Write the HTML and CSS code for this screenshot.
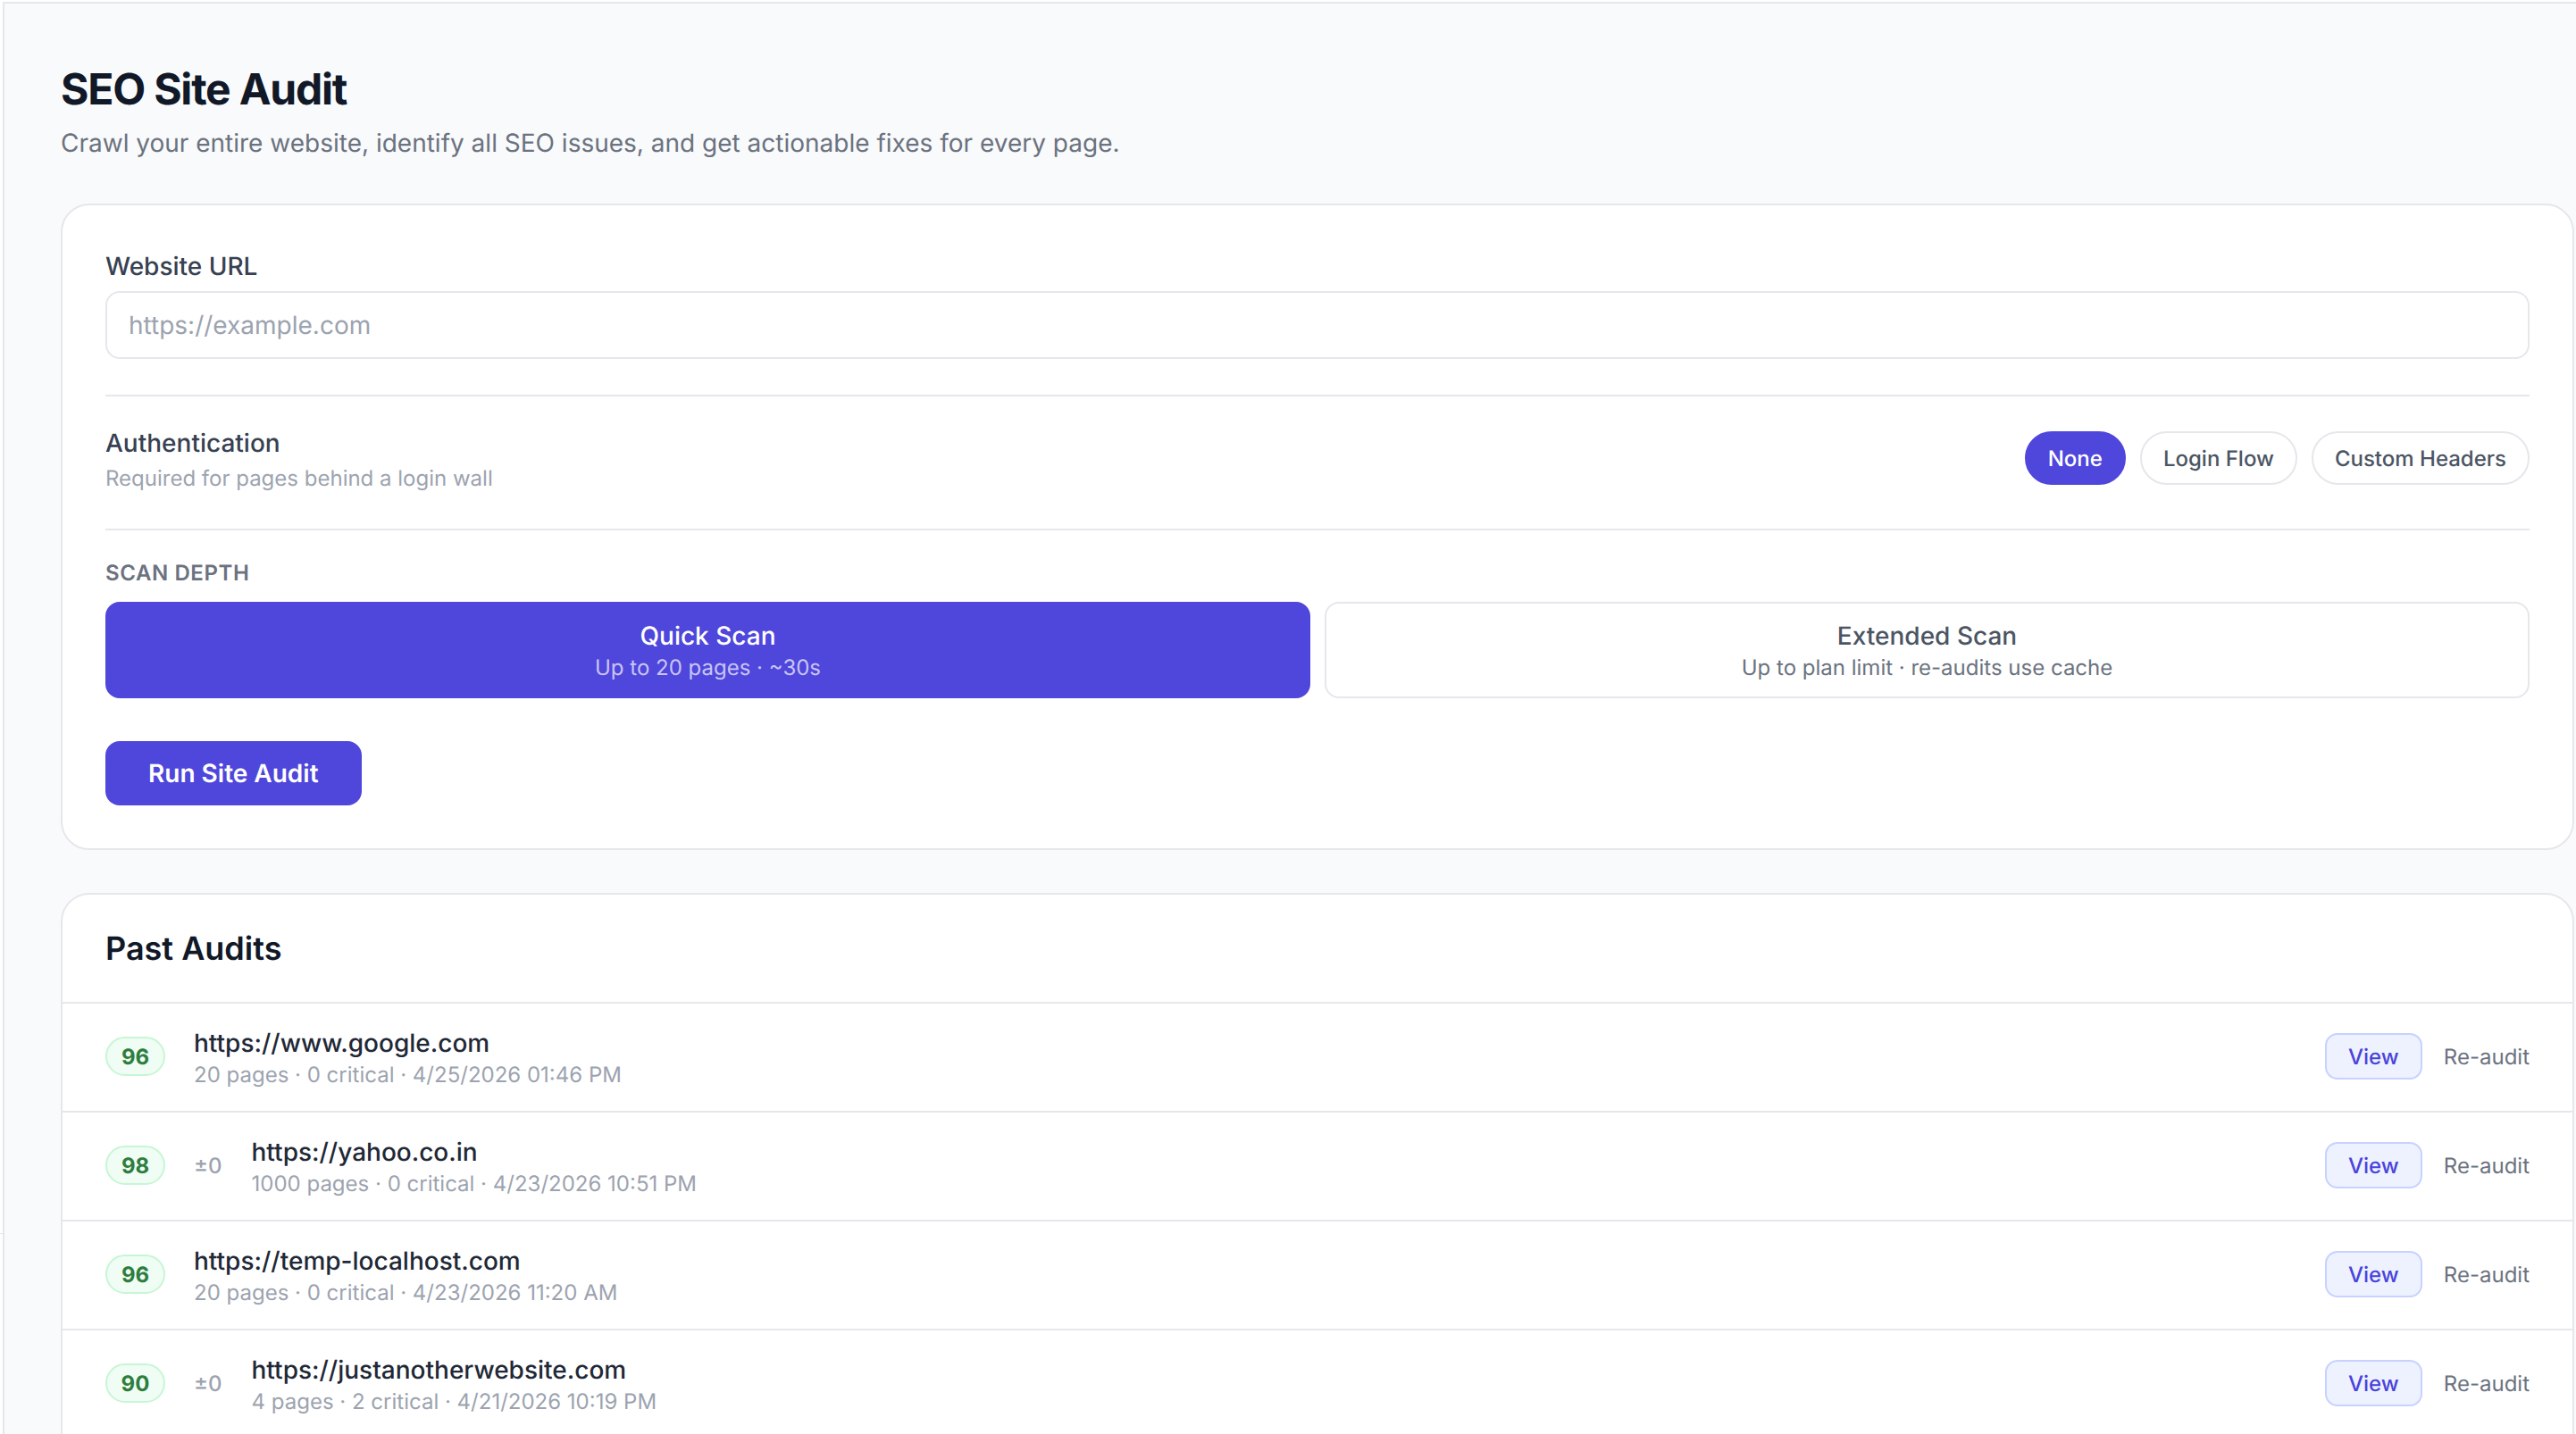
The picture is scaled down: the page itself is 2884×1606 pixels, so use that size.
FILE: index.html
```html
<!DOCTYPE html>
<html lang="en">
<head>
<meta charset="utf-8">
<title>SEO Site Audit</title>
<link rel="stylesheet" href="styles.css">
</head>
<body>
<span class="edge-tick"></span>
<main class="main">
  <h1 class="title">SEO Site Audit</h1>
  <p class="subtitle">Crawl your entire website, identify all SEO issues, and get actionable fixes for every page.</p>

  <section class="card form-card">
    <label class="field-label" for="url">Website URL</label>
    <input class="url-input" id="url" type="text" placeholder="https://example.com">

    <div class="auth-row">
      <div class="auth-text">
        <div class="auth-title">Authentication</div>
        <div class="auth-sub">Required for pages behind a login wall</div>
      </div>
      <div class="pills">
        <button class="pill pill-active">None</button>
        <button class="pill">Login Flow</button>
        <button class="pill">Custom Headers</button>
      </div>
    </div>

    <div class="depth">
      <div class="depth-label">SCAN DEPTH</div>
      <div class="depth-grid">
        <button class="depth-opt depth-active">
          <span class="depth-name">Quick Scan</span>
          <span class="depth-desc">Up to 20 pages · ~30s</span>
        </button>
        <button class="depth-opt">
          <span class="depth-name">Extended Scan</span>
          <span class="depth-desc">Up to plan limit · re-audits use cache</span>
        </button>
      </div>
    </div>

    <button class="run-btn">Run Site Audit</button>
  </section>

  <section class="card past-card">
    <h2 class="past-title">Past Audits</h2>
    <div class="row">
      <span class="score">96</span>
      <div class="row-info">
        <div class="row-url">https://www.google.com</div>
        <div class="row-meta">20 pages · 0 critical · 4/25/2026 01:46 PM</div>
      </div>
      <div class="row-actions"><button class="view-btn">View</button><button class="reaudit-btn">Re-audit</button></div>
    </div>
    <div class="row">
      <span class="score">98</span>
      <span class="delta">±0</span>
      <div class="row-info">
        <div class="row-url">https://yahoo.co.in</div>
        <div class="row-meta">1000 pages · 0 critical · 4/23/2026 10:51 PM</div>
      </div>
      <div class="row-actions"><button class="view-btn">View</button><button class="reaudit-btn">Re-audit</button></div>
    </div>
    <div class="row">
      <span class="score">96</span>
      <div class="row-info">
        <div class="row-url">https://temp-localhost.com</div>
        <div class="row-meta">20 pages · 0 critical · 4/23/2026 11:20 AM</div>
      </div>
      <div class="row-actions"><button class="view-btn">View</button><button class="reaudit-btn">Re-audit</button></div>
    </div>
    <div class="row">
      <span class="score">90</span>
      <span class="delta">±0</span>
      <div class="row-info">
        <div class="row-url">https://justanotherwebsite.com</div>
        <div class="row-meta">4 pages · 2 critical · 4/21/2026 10:19 PM</div>
      </div>
      <div class="row-actions"><button class="view-btn">View</button><button class="reaudit-btn">Re-audit</button></div>
    </div>
  </section>
</main>
</body>
</html>
```
FILE: styles.css
```css
* { box-sizing: border-box; }
html, body { margin: 0; height: 1606px; overflow: hidden; background: #fff; }
body { font-family: Inter, "Liberation Sans", sans-serif; color: #111827; position: relative; text-rendering: geometricPrecision; }
button, input { font-family: inherit; text-rendering: geometricPrecision; }

.edge-tick { position: absolute; left: 0; top: 1381px; width: 3px; height: 1px; background: #e5e7eb; }

.main {
  margin: 2px 0 0 3px;
  height: 1604px;
  overflow: hidden;
  background: #f9fafb;
  border-top: 2px solid #e5e7eb;
  border-left: 2px solid #e5e7eb;
  padding: 68px 2px 0 63px;
}
.title { margin: 0; font-size: 48px; line-height: 56px; font-weight: 700; letter-spacing: -1.2px; color: #111827; }
.subtitle { margin: 12px 0 0; font-size: 28px; line-height: 40px; color: #6b7280; }

.card { background: #fff; border: 2px solid #e5e7eb; border-radius: 32px; }
.form-card { margin-top: 48px; padding: 48px 48px 46px; height: 724px; }

.field-label { display: block; font-size: 28px; line-height: 40px; font-weight: 500; color: #374151; }
.url-input {
  display: block; width: 100%; height: 76px; margin-top: 8px;
  padding: 0 24px; border: 2px solid #e5e7eb; border-radius: 16px;
  font-size: 28px; color: #111827; background: #fff; outline: none;
}
.url-input::placeholder { color: #9ca3af; opacity: 1; }

.auth-row {
  display: flex; align-items: center; justify-content: space-between;
  margin-top: 40px; height: 152px;
  border-top: 2px solid #e5e7eb; border-bottom: 2px solid #e5e7eb;
}
.auth-text { margin-top: -6px; }
.auth-title { font-size: 28px; line-height: 40px; font-weight: 500; color: #374151; }
.auth-sub { font-size: 24px; line-height: 36px; color: #9ca3af; margin-top: 2px; }
.pills { display: flex; gap: 16px; margin-top: -10px; }
.pill {
  height: 60px; padding: 0 24px; border: 2px solid #e5e7eb; border-radius: 999px;
  background: #fff; font-size: 24px; font-weight: 500; color: #4b5563;
}
.pill-active { background: #4f46dc; border-color: #4f46dc; color: #fff; }

.depth { margin-top: 32px; }
.depth-label { font-size: 24px; line-height: 32px; font-weight: 600; letter-spacing: 0.6px; color: #6b7280; }
.depth-grid { display: grid; grid-template-columns: 1fr 1fr; gap: 16px; margin-top: 16px; }
.depth-opt {
  display: flex; flex-direction: column; align-items: center; justify-content: center;
  height: 108px; border: 2px solid #e5e7eb; border-radius: 16px; background: #fff; color: #4b5563;
}
.depth-active { background: #4f46dc; border-color: #4f46dc; color: #fff; }
.depth-name { font-size: 28px; line-height: 40px; font-weight: 500; }
.depth-desc { font-size: 24px; line-height: 32px; color: #6b7280; }
.depth-active .depth-desc { color: rgba(255, 255, 255, 0.7); }

.run-btn {
  display: block; margin-top: 48px; height: 72px; padding: 0 48px;
  border: 0; border-radius: 16px; background: #4f46dc; color: #fff;
  font-size: 28px; font-weight: 600;
}

.past-card { margin-top: 48px; border-radius: 32px 32px 0 0; border-bottom: 0; height: 700px; overflow: hidden; }
.past-title { margin: 0; height: 120px; padding: 0 48px; display: flex; align-items: center; font-size: 36px; font-weight: 600; color: #111827; }
.row {
  display: flex; align-items: center; gap: 32px; height: 122px;
  padding: 0 48px 2px; border-top: 2px solid #e5e7eb;
}
.score {
  width: 67px; height: 44px; display: flex; align-items: center; justify-content: center;
  background: #f0fdf4; border: 2px solid #c6f6d5; border-radius: 999px;
  font-size: 24px; font-weight: 700; color: #2e7d3e;
}
.delta { font-size: 24px; font-weight: 500; color: #9ca3af; padding-right: 1px; }
.row-info { flex: 1; padding-top: 4px; }
.row-url { font-size: 28px; line-height: 38px; font-weight: 500; color: #1f2937; }
.row-meta { font-size: 24px; line-height: 34px; color: #9ca3af; }
.row-actions { display: flex; align-items: center; gap: 24px; }
.view-btn {
  width: 109px; height: 52px; border: 2px solid #c7d2fe; border-radius: 14px;
  background: #eef2ff; color: #4a43dc; font-size: 24px; font-weight: 500;
}
.reaudit-btn { border: 0; padding: 0; background: none; color: #6b7280; font-size: 24px; }
```
